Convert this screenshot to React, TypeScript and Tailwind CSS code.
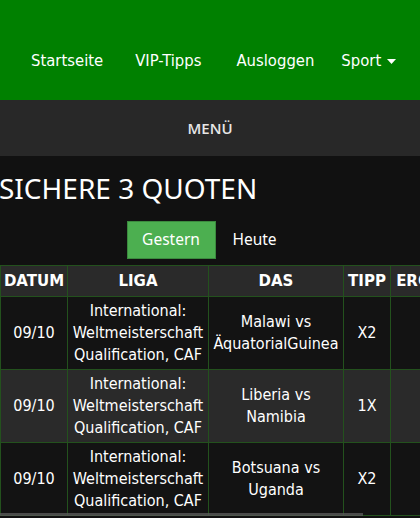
import React from "react";

const cellFont = { fontFamily: '"DejaVu Sans Condensed", "DejaVu Sans", Tahoma, sans-serif' };

const rows = [
  { d: "09/10", liga: ["International:", "Weltmeisterschaft", "Qualification, CAF"], das: ["Malawi vs", "ÄquatorialGuinea"], tipp: "X2" },
  { d: "09/10", liga: ["International:", "Weltmeisterschaft", "Qualification, CAF"], das: ["Liberia vs", "Namibia"], tipp: "1X" },
  { d: "09/10", liga: ["International:", "Weltmeisterschaft", "Qualification, CAF"], das: ["Botsuana vs", "Uganda"], tipp: "X2" },
];

export default function App() {
  return (
    <div className="min-h-[518px] w-[420px] bg-[#111111] text-white overflow-hidden" style={cellFont}>
      <nav className="h-[100px] bg-[#008000] flex items-center pl-[15px] pt-[22px] text-[16.5px] font-stretch-condensed">
        <a className="px-4 text-white">Startseite</a>
        <a className="px-4 pr-[19px] text-white">VIP-Tipps</a>
        <a className="px-4 text-white">Ausloggen</a>
        <a className="pl-[11px] text-white flex items-center gap-[6px]">
          Sport
          <svg width="9" height="5" viewBox="0 0 9 5"><path d="M0 0H9L4.5 5Z" fill="white" /></svg>
        </a>
      </nav>
      <div className="h-[56px] bg-[#282828] flex items-center justify-center text-[15px] font-semibold text-[#e6e6e6]" style={{ fontFamily: '"Open Sans", "Noto Sans", sans-serif' }}>
        MENÜ
      </div>
      <h1 className="mt-[15px] text-[28px] leading-[35px] text-white -ml-[1px]" style={{ fontFamily: '"Noto Sans", "Open Sans", sans-serif' }}>
        SICHERE 3 QUOTEN
      </h1>
      <div className="flex justify-center mt-[15px] text-[15.5px]" style={{ fontFamily: '"Noto Sans", "Open Sans", sans-serif' }}>
        <button className="h-[38px] w-[89px] bg-[#4caf50] border border-[#3b8a3e] text-white">Gestern</button>
        <button className="h-[38px] w-[78px] text-white">Heute</button>
      </div>
      <div className="relative mt-[6px] overflow-hidden">
        <table className="table-fixed border-collapse w-[486px] text-[16px] leading-[22px] font-stretch-condensed">
          <colgroup>
            <col className="w-[67px]" />
            <col className="w-[141px]" />
            <col className="w-[135px]" />
            <col className="w-[47px]" />
            <col className="w-[96px]" />
          </colgroup>
          <thead>
            <tr className="bg-[#2a2a2a] h-[31px]">
              {["DATUM", "LIGA", "DAS", "TIPP", "ERGEBNIS"].map((h) => (
                <th
                  key={h}
                  className="border border-[#23511d] px-[2px] font-bold text-[15px] text-center whitespace-nowrap overflow-hidden font-stretch-normal"
                  style={{ fontFamily: '"DejaVu Sans", Tahoma, sans-serif' }}
                >
                  {h}
                </th>
              ))}
            </tr>
          </thead>
          <tbody>
            {rows.map((r, i) => (
              <tr key={i} className={`h-[73px] ${i % 2 === 1 ? "bg-[#2a2a2a]" : "bg-[#131313]"}`}>
                <td className="border border-[#23511d] text-center">{r.d}</td>
                <td className="border border-[#23511d] text-center whitespace-nowrap">
                  {r.liga.map((l) => (
                    <div key={l}>{l}</div>
                  ))}
                </td>
                <td className="border border-[#23511d] text-center whitespace-nowrap">
                  {r.das.map((l) => (
                    <div key={l}>{l}</div>
                  ))}
                </td>
                <td className="border border-[#23511d] text-center">{r.tipp}</td>
                <td className="border border-[#23511d] text-center"></td>
              </tr>
            ))}
          </tbody>
        </table>
        <div className="absolute left-0 bottom-[-1px] h-[4px] w-[363px] bg-[#5a5a5a]/80" />
      </div>
    </div>
  );
}
